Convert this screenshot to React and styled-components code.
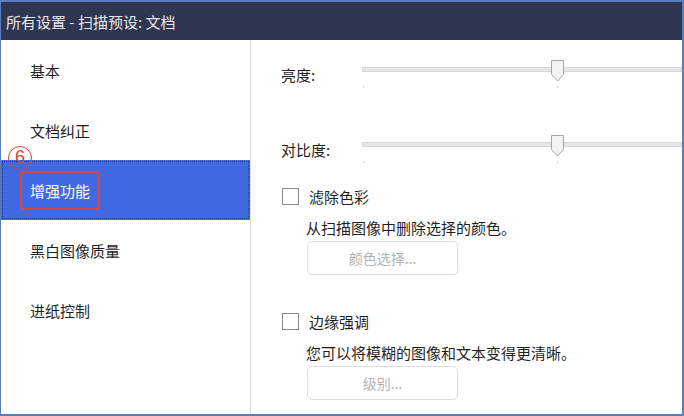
import React from 'react'
import styled, { createGlobalStyle } from 'styled-components'

const GlobalStyle = createGlobalStyle`
  html, body {
    margin: 0;
    padding: 0;
    background: #fff;
  }

  body {
    font-family: "Noto Sans CJK SC", "Noto Sans", sans-serif;
  }
`

const Window = styled.div`
  width: 684px;
  height: 416px;
  box-sizing: border-box;
  border-style: solid;
  border-color: #5b7cbf;
  border-width: 2px 2px 2px 1px;
  display: flex;
  flex-direction: column;
  overflow: hidden;
  background: #fff;
`

const TitleBar = styled.div`
  height: 38px;
  flex: none;
  background: #2f3652;
  color: #e8e8e8;
  font-size: 15px;
  padding-left: 5px;
  display: flex;
  align-items: center;
`

const Body = styled.div`
  flex: 1;
  display: flex;
  min-height: 0;
`

const Sidebar = styled.ul`
  list-style: none;
  margin: 0;
  padding: 0;
  width: 249px;
  flex: none;
  border-right: 1px solid #dadada;
`

const NavItem = styled.li`
  position: relative;
  height: 60px;
  box-sizing: border-box;
  padding-left: 29px;
  display: flex;
  align-items: center;
  font-size: 15px;
  color: ${p => (p.$active ? '#fff' : '#1f1f1f')};
  background: ${p => (p.$active ? '#4169e1' : 'transparent')};
  outline: ${p => (p.$active ? '1px dotted #1d3590' : 'none')};
  outline-offset: -2px;
`

const Marked = styled.span`
  margin-left: -10px;
  height: 39px;
  box-sizing: border-box;
  padding: 0 8px;
  display: flex;
  align-items: center;
  border: 2.5px solid #e0443c;
  border-radius: 4px;
`

const StepBadge = styled.span`
  position: absolute;
  left: 7px;
  top: -14px;
  width: 24px;
  height: 24px;
  box-sizing: border-box;
  border: 1.5px solid #de3f36;
  border-radius: 50%;
  color: #de3f36;
  font-family: "Liberation Sans", sans-serif;
  font-size: 18px;
  line-height: 21px;
  text-align: center;
`

const Content = styled.div`
  flex: 1;
  padding: 19px 0 0 30px;
  display: flex;
  flex-direction: column;
  font-size: 15px;
  color: #1f1f1f;
`

const SliderRow = styled.div`
  display: grid;
  grid-template-columns: 81px 1fr;
  align-items: start;
  margin-bottom: ${p => p.$gap || 0}px;
`

const SliderLabel = styled.span`
  padding-top: 5px;
  line-height: 22px;
`

const Slider = styled.div`
  position: relative;
  height: 30px;
`

const Track = styled.div`
  position: absolute;
  left: 0;
  right: 0;
  top: 8px;
  height: 5px;
  box-sizing: border-box;
  background: #e6e6e6;
  border: 1px solid #d6d6d6;
`

const Tick = styled.span`
  position: absolute;
  top: 27px;
  left: ${p => p.$x}px;
  width: 1px;
  height: 2px;
  background: #d0d0d0;
`

const Thumb = styled.svg`
  position: absolute;
  top: 0;
  left: ${p => p.$x}px;
`

const Option = styled.div`
  display: flex;
  flex-direction: column;
  align-items: flex-start;
  padding-left: 1px;
  margin-bottom: ${p => p.$gap || 0}px;
`

const CheckRow = styled.label`
  display: flex;
  align-items: center;
  gap: 10px;
  height: 20px;
`

const Box = styled.span`
  width: 17px;
  height: 17px;
  box-sizing: border-box;
  border: 1.5px solid #8a8a8a;
  background: #fff;
`

const Hint = styled.div`
  margin: 12px 0 0 24px;
  line-height: 20px;
  font-size: 15px;
`

const GhostButton = styled.button`
  margin: 3px 0 0 25px;
  width: 151px;
  height: 34px;
  border: 1px solid #dedede;
  border-radius: 5px;
  background: #fff;
  color: #b3b3b3;
  font-family: inherit;
  font-size: 14px;
`

const nav = ['基本', '文档纠正', '增强功能', '黑白图像质量', '进纸控制']

function SliderField({ label, gap }) {
  return (
    <SliderRow $gap={gap}>
      <SliderLabel>{label}</SliderLabel>
      <Slider>
        <Track />
        <Tick $x={1} />
        <Tick $x={195} />
        <Thumb $x={188} width="15" height="24" viewBox="0 0 15 24">
          <path d="M1.5 1.5 H13.5 V15.5 L7.5 22 L1.5 15.5 Z" fill="#f3f3f3" stroke="#a6a6a6" strokeWidth="1" />
        </Thumb>
      </Slider>
    </SliderRow>
  )
}

export default function App() {
  return (
    <Window>
      <GlobalStyle />
      <TitleBar>所有设置 - 扫描预设: 文档</TitleBar>
      <Body>
        <Sidebar>
          {nav.map(item =>
            item === '增强功能' ? (
              <NavItem key={item} $active>
                <StepBadge>6</StepBadge>
                <Marked>{item}</Marked>
              </NavItem>
            ) : (
              <NavItem key={item}>{item}</NavItem>
            )
          )}
        </Sidebar>
        <Content>
          <SliderField label="亮度:" gap={45} />
          <SliderField label="对比度:" gap={22} />
          <Option $gap={36}>
            <CheckRow><Box />滤除色彩</CheckRow>
            <Hint>从扫描图像中删除选择的颜色。</Hint>
            <GhostButton>颜色选择...</GhostButton>
          </Option>
          <Option>
            <CheckRow><Box />边缘强调</CheckRow>
            <Hint>您可以将模糊的图像和文本变得更清晰。</Hint>
            <GhostButton>级别...</GhostButton>
          </Option>
        </Content>
      </Body>
    </Window>
  )
}
